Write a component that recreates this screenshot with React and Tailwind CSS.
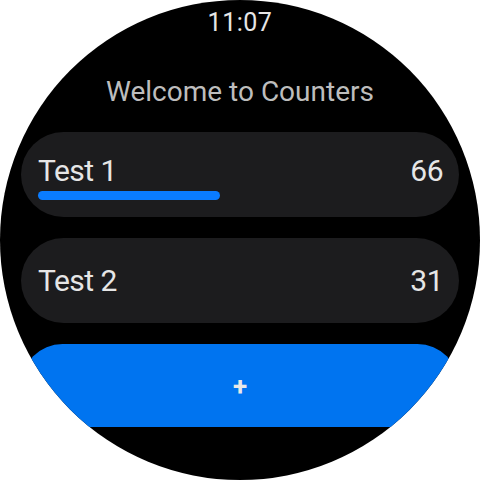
export default function App() {
  const font = { fontFamily: 'Roboto, "Noto Sans", sans-serif' };
  return (
    <div className="w-[480px] h-[480px] bg-white" style={font}>
      <div className="w-[480px] h-[480px] rounded-full bg-black overflow-hidden flex flex-col items-center">
        <div className="mt-[8px] h-[30px] text-[25px] leading-[30px] text-[#e6e6e6] tracking-[0.5px]">11:07</div>
        <div className="mt-[39px] h-[30px] text-[28px] leading-[30px] text-[#bdbdbd]">Welcome to Counters</div>
        <div className="mt-[25px] w-[438px] h-[85px] rounded-full bg-[#1c1c1e] pl-[17px] pr-[16px] pt-[24px] flex flex-col">
          <div className="flex justify-between items-center text-[30px] leading-[30px] text-[#e6e6e6] tracking-[-0.5px]">
            <span>Test 1</span>
            <span>66</span>
          </div>
          <div className="mt-[5px] w-[182px] h-[9px] rounded-full bg-[#0a7cff]"></div>
        </div>
        <div className="mt-[21px] w-[438px] h-[85px] rounded-full bg-[#1c1c1e] pl-[17px] pr-[16px] flex items-center justify-between text-[30px] leading-[30px] text-[#e6e6e6] tracking-[-0.5px]">
          <span>Test 2</span>
          <span>31</span>
        </div>
        <div className="mt-[21px] w-[438px] h-[83px] rounded-[42px] bg-[#0074f0] flex items-center justify-center">
          <span className="text-[26px] leading-[26px] font-bold text-[#e8e8e8]">+</span>
        </div>
      </div>
    </div>
  );
}
